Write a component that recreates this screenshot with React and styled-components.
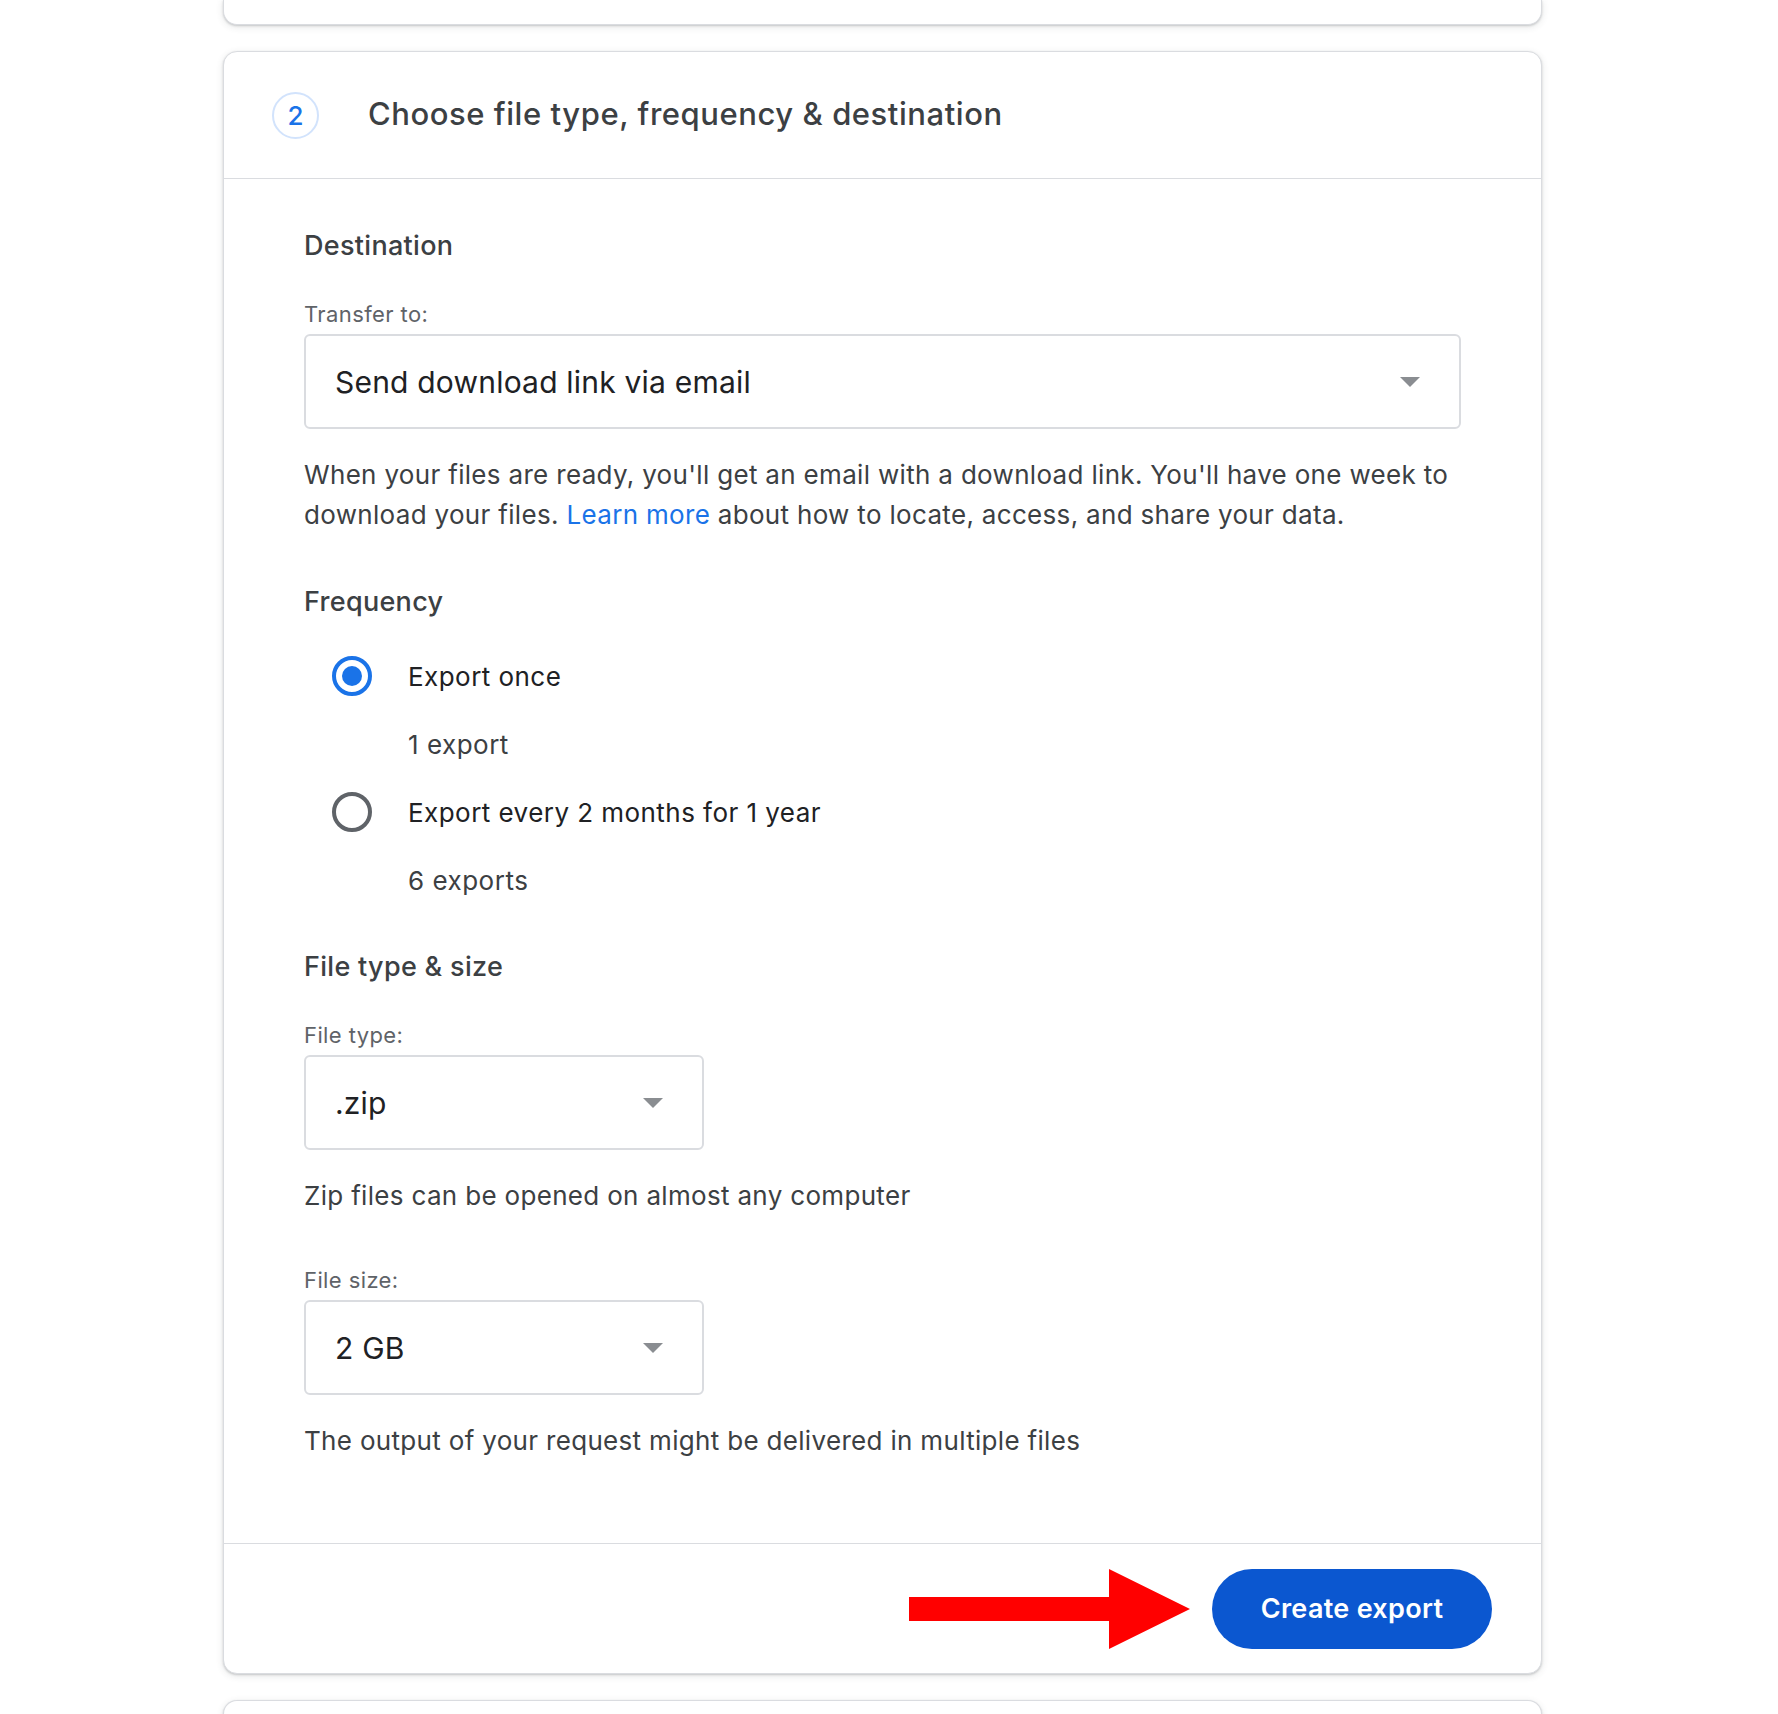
import React from "react";
import styled, { createGlobalStyle } from "styled-components";

const Global = createGlobalStyle`
  html, body { margin: 0; padding: 0; background: #ffffff; }
  body { font-family: Inter, Roboto, "Liberation Sans", Arial, sans-serif; color: #3c4043; }
  * { box-sizing: border-box; }
`;

const Page = styled.div`
  width: 1778px;
  padding: 0 236px 0 223px;
  display: flex;
  flex-direction: column;
  gap: 26px;
  overflow: hidden;
  height: 1714px;
`;

const Card = styled.section`
  background: #fff;
  border: 1px solid #dadce0;
  border-radius: 14px;
  box-shadow: 0 1px 2px rgba(60, 64, 67, 0.22), 0 2px 6px 1px rgba(60, 64, 67, 0.1);
`;

const StubTop = styled(Card)`
  height: 25px;
  border-top: none;
  border-radius: 0 0 14px 14px;
  flex: none;
`;

const StubBottom = styled(Card)`
  height: 40px;
  border-bottom: none;
  border-radius: 14px 14px 0 0;
  flex: none;
`;

const Header = styled.header`
  height: 127px;
  display: flex;
  align-items: center;
  padding-left: 48px;
  gap: 49px;
  border-bottom: 1px solid #dadce0;
`;

const StepCircle = styled.div`
  width: 47px;
  height: 47px;
  border-radius: 50%;
  border: 2px solid #d2e3fc;
  color: #1a73e8;
  display: flex;
  align-items: center;
  justify-content: center;
  font-size: 26px;
  font-weight: 500;
`;

const Title = styled.h2`
  margin: 0 0 4px 0;
  font-size: 31px;
  font-weight: 500;
  color: #3c4043;
  letter-spacing: 0.55px;
`;

const Body = styled.div`
  padding: 51px 80px 82px 80px;
  display: flex;
  flex-direction: column;
  border-bottom: 1px solid #dadce0;
`;

const SectionTitle = styled.h3`
  margin: ${(p) => p.$top || 0}px 0 0 0;
  font-size: 27px;
  line-height: 32px;
  font-weight: 500;
  color: #3c4043;
  letter-spacing: 0.3px;
`;

const FieldLabel = styled.label`
  margin-top: ${(p) => p.$top || 38}px;
  font-size: 22px;
  line-height: 28px;
  color: #5f6368;
  letter-spacing: 0.4px;
`;

const Select = styled.div`
  margin-top: 6px;
  width: ${(p) => p.$width || "100%"};
  height: 95px;
  border: 2px solid #dadce0;
  border-radius: 6px;
  display: flex;
  align-items: center;
  justify-content: space-between;
  padding: 0 39px 0 29px;
  font-size: 30px;
  letter-spacing: 0.2px;
  color: #202124;
`;

const Caret = styled.span`
  width: 0;
  height: 0;
  border-left: 10px solid transparent;
  border-right: 10px solid transparent;
  border-top: 10px solid #8a8d91;
`;

const Help = styled.p`
  margin: 26px 0 0 0;
  font-size: 26px;
  line-height: 40px;
  letter-spacing: 0.32px;
  color: #3c4043;
`;

const Link = styled.a`
  color: #1a73e8;
  text-decoration: none;
`;

const RadioList = styled.div`
  margin-top: 24px;
  display: flex;
  flex-direction: column;
`;

const RadioRow = styled.div`
  height: 68px;
  display: flex;
  align-items: center;
  padding-left: 28px;
  gap: 36px;
  font-size: 26px;
  letter-spacing: 0.45px;
  color: #202124;
`;

const Radio = styled.span`
  width: 40px;
  height: 40px;
  border-radius: 50%;
  border: 4px solid ${(p) => (p.$checked ? "#1a73e8" : "#5f6368")};
  display: flex;
  align-items: center;
  justify-content: center;
  &::after {
    content: "";
    width: 20px;
    height: 20px;
    border-radius: 50%;
    background: ${(p) => (p.$checked ? "#1a73e8" : "transparent")};
  }
`;

const SubText = styled.div`
  height: 68px;
  display: flex;
  align-items: center;
  padding-left: 104px;
  font-size: 26px;
  letter-spacing: 0.5px;
  color: #3c4043;
`;

const Footer = styled.footer`
  height: 129px;
  display: flex;
  align-items: center;
  justify-content: flex-end;
  padding-right: 49px;
  gap: 22px;
`;

const Button = styled.button`
  width: 280px;
  height: 80px;
  border: none;
  border-radius: 40px;
  background: #0b57d0;
  color: #fff;
  font-family: Inter, Roboto, sans-serif;
  font-size: 27px;
  font-weight: 600;
  letter-spacing: 0.3px;
  cursor: pointer;
`;

const Arrow = () => (
  <svg width="281" height="80" viewBox="0 0 281 80">
    <polygon points="0,28 200,28 200,0 281,40 200,80 200,52 0,52" fill="#ff0000" />
  </svg>
);

export default function App() {
  return (
    <>
      <Global />
      <Page>
        <StubTop />
        <Card>
          <Header>
            <StepCircle>2</StepCircle>
            <Title>Choose file type, frequency &amp; destination</Title>
          </Header>
          <Body>
            <SectionTitle>Destination</SectionTitle>
            <FieldLabel>Transfer to:</FieldLabel>
            <Select>
              <span>Send download link via email</span>
              <Caret />
            </Select>
            <Help>
              When your files are ready, you'll get an email with a download link. You'll have one week to
              download your files. <Link href="#">Learn more</Link> about how to locate, access, and share your data.
            </Help>

            <SectionTitle $top={51}>Frequency</SectionTitle>
            <RadioList>
              <RadioRow>
                <Radio $checked />
                Export once
              </RadioRow>
              <SubText>1 export</SubText>
              <RadioRow>
                <Radio />
                Export every 2 months for 1 year
              </RadioRow>
              <SubText>6 exports</SubText>
            </RadioList>

            <SectionTitle $top={37}>File type &amp; size</SectionTitle>
            <FieldLabel>File type:</FieldLabel>
            <Select $width="400px">
              <span>.zip</span>
              <Caret />
            </Select>
            <Help>Zip files can be opened on almost any computer</Help>
            <FieldLabel $top={50}>File size:</FieldLabel>
            <Select $width="400px">
              <span>2 GB</span>
              <Caret />
            </Select>
            <Help>The output of your request might be delivered in multiple files</Help>
          </Body>
          <Footer>
            <Arrow />
            <Button>Create export</Button>
          </Footer>
        </Card>
        <StubBottom />
      </Page>
    </>
  );
}
